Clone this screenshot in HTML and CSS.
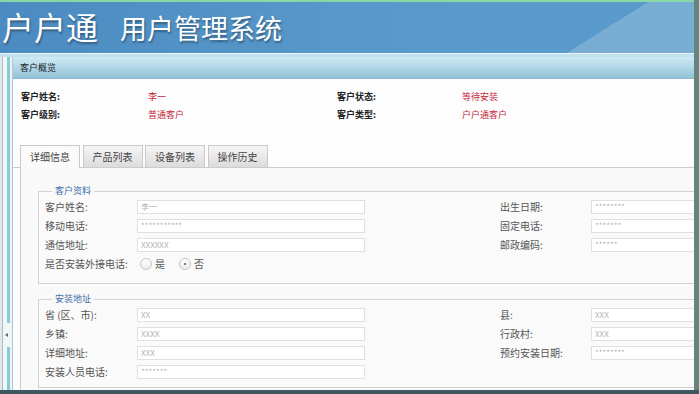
FILE: index.html
```html
<!DOCTYPE html>
<html lang="zh-CN">
<head>
    <meta charset="UTF-8">
    <title>户户通 用户管理系统</title>
    <link rel="stylesheet" href="styles.css">
</head>
<body>
    <div class="window">
        <div class="header">
            <span class="brand">户户通</span>
            <span class="system">用户管理系统</span>
        </div>
        <div class="band"></div>

        <div class="workspace">
            <div class="side"><span class="handle"></span></div>

            <div class="panel">
                <div class="panel-title">客户概览</div>

                <div class="summary">
                    <span class="sum-label">客户姓名:</span>
                    <span class="sum-value">李一</span>
                    <span class="sum-label">客户状态:</span>
                    <span class="sum-value">等待安装</span>
                    <span class="sum-label">客户级别:</span>
                    <span class="sum-value">普通客户</span>
                    <span class="sum-label">客户类型:</span>
                    <span class="sum-value">户户通客户</span>
                </div>

                <div class="tabs">
                    <span class="tab active">详细信息</span>
                    <span class="tab">产品列表</span>
                    <span class="tab">设备列表</span>
                    <span class="tab">操作历史</span>
                </div>

                <div class="tab-body">
                    <fieldset class="group">
                        <legend>客户资料</legend>
                        <div class="form-grid">
                            <label>客户姓名:</label>
                            <input class="field" type="text" value="李一" readonly>
                            <span></span>
                            <label>出生日期:</label>
                            <input class="field" type="text" value="********" readonly>

                            <label>移动电话:</label>
                            <input class="field" type="text" value="***********" readonly>
                            <span></span>
                            <label>固定电话:</label>
                            <input class="field" type="text" value="*******" readonly>

                            <label>通信地址:</label>
                            <input class="field" type="text" value="XXXXXX" readonly>
                            <span></span>
                            <label>邮政编码:</label>
                            <input class="field" type="text" value="******" readonly>

                            <label>是否安装外接电话:</label>
                            <div class="radios">
                                <span class="radio"></span><span class="radio-text">是</span>
                                <span class="radio checked"></span><span class="radio-text">否</span>
                            </div>
                        </div>
                    </fieldset>

                    <fieldset class="group group-next">
                        <legend>安装地址</legend>
                        <div class="form-grid">
                            <label>省 (区、市):</label>
                            <input class="field" type="text" value="XX" readonly>
                            <span></span>
                            <label>县:</label>
                            <input class="field" type="text" value="XXX" readonly>

                            <label>乡镇:</label>
                            <input class="field" type="text" value="XXXX" readonly>
                            <span></span>
                            <label>行政村:</label>
                            <input class="field" type="text" value="XXX" readonly>

                            <label>详细地址:</label>
                            <input class="field" type="text" value="XXX" readonly>
                            <span></span>
                            <label>预约安装日期:</label>
                            <input class="field" type="text" value="********" readonly>

                            <label>安装人员电话:</label>
                            <input class="field" type="text" value="*******" readonly>
                        </div>
                    </fieldset>
                </div>
            </div>
        </div>
    </div>
    <div class="bottom-bar"></div>
</body>
</html>
```

FILE: styles.css
```css
body {
    margin: 0;
    width: 699px;
    height: 394px;
    overflow: hidden;
    font-family: "Noto Sans CJK SC", "DejaVu Sans", sans-serif;
    background-color: #fdfdfd;
}

.window {
    height: 390px;
    display: flex;
    flex-direction: column;
    overflow: hidden;
    border-right: 5px solid #62857f;
}

.header {
    height: 51px;
    flex-shrink: 0;
    display: flex;
    align-items: center;
    border-top: 2px solid #86d9a4;
    background:
        linear-gradient(148deg, transparent 83.6%, rgba(255,255,255,0.18) 83.6%),
        linear-gradient(to right, #4b8bc1, #5a9acb 60%, #5b9bcb);
    color: white;
    text-shadow: 1px 2px 2px rgba(0,0,0,0.35);
}

.brand {
    font-size: 32px;
    margin-left: 2px;
    margin-top: -3px;
    line-height: 1;
}

.system {
    font-size: 27px;
    margin-left: 22px;
    margin-top: -1px;
    line-height: 1;
}

.band {
    height: 3px;
    flex-shrink: 0;
    border-top: 1px solid #eef8fc;
    background-color: #c2e1ef;
}

.workspace {
    flex: 1;
    display: flex;
    min-height: 0;
}

.side {
    width: 12px;
    flex-shrink: 0;
    position: relative;
    background: linear-gradient(to right,
        #dfe9ee 0, #dfe9ee 2px,
        #a9bcc4 2px, #a9bcc4 3px,
        #f3f6f7 3px, #f3f6f7 7px,
        #86cbd9 7px, #86cbd9 10px,
        #eef3f5 10px, #eef3f5 12px);
}

.handle {
    position: absolute;
    left: 3px;
    top: 266px;
    width: 7px;
    height: 24px;
    background-color: #f3f6f7;
}

.handle::after {
    content: "";
    position: absolute;
    left: 2px;
    top: 10px;
    border-top: 2px solid transparent;
    border-bottom: 2px solid transparent;
    border-right: 3px solid #666;
}

.panel {
    flex: 1;
    min-width: 0;
    overflow: hidden;
    border-left: 1px solid #b4c6ce;
    background-color: #fdfdfd;
}

.panel-title {
    height: 21px;
    line-height: 21px;
    padding-left: 7px;
    font-size: 9px;
    color: #222;
    background: linear-gradient(to bottom, #cfeaf6, #94c2d8);
    border-bottom: 1px solid #8fb5c9;
}

.summary {
    display: grid;
    grid-template-columns: 127px 189px 125px auto;
    grid-auto-rows: 18px;
    align-items: center;
    padding: 8px 8px 0 8px;
    font-size: 9px;
}

.sum-label {
    font-weight: bold;
    color: #222;
}

.sum-value {
    color: #c5283c;
}

.tabs {
    display: flex;
    gap: 2.5px;
    margin-top: 22px;
    padding-left: 7px;
    height: 22px;
    border-bottom: 1px solid #cccccc;
}

.tab {
    width: 58px;
    height: 21px;
    line-height: 21px;
    text-align: center;
    font-size: 10px;
    color: #444;
    border: 1px solid #c9c9c9;
    border-bottom: none;
    background: linear-gradient(to bottom, #f5f5f5, #dcdcdc);
}

.tab.active {
    height: 22px;
    background: #fafafa;
}

.tab-body {
    width: 720px;
    margin-left: 7px;
    padding: 17px 0 0 17px;
    border-left: 1px solid #cccccc;
    background-color: #f9f9f9;
    height: 300px;
}

.group {
    margin: 0;
    padding: 0 0 10px 6px;
    border: 1px solid #d2d2d2;
    background-color: #fafafa;
}

.group-next {
    margin-top: 9px;
    padding-bottom: 6px;
}

.group legend {
    margin-left: 7px;
    padding: 0 3px;
    font-size: 9px;
    line-height: 12px;
    color: #3d6ea8;
}

.form-grid {
    display: grid;
    grid-template-columns: 92px 228px 135px 91px 150px;
    grid-auto-rows: 19px;
    align-items: center;
}

.form-grid label {
    font-size: 10px;
    color: #555;
}

.field {
    box-sizing: border-box;
    height: 14px;
    margin: 0;
    padding: 0 3px;
    border: 1px solid #e0e0e0;
    background-color: #fff;
    font-family: "Noto Sans CJK SC", "DejaVu Sans", sans-serif;
    font-size: 8px;
    color: #b4b4b4;
    outline: none;
}

.radios {
    display: flex;
    align-items: center;
    padding-left: 3px;
}

.radio {
    box-sizing: border-box;
    width: 12px;
    height: 12px;
    border: 1px solid #c4c4c4;
    border-radius: 50%;
    background: linear-gradient(to bottom, #ffffff, #ececec);
    position: relative;
}

.radio.checked::after {
    content: "";
    position: absolute;
    left: 4px;
    top: 4px;
    width: 2px;
    height: 2px;
    border-radius: 50%;
    background-color: #555;
}

.radio-text {
    font-size: 10px;
    color: #555;
    margin: 0 14px 0 3px;
}

.bottom-bar {
    height: 4px;
    background-color: #3e5762;
}
```
